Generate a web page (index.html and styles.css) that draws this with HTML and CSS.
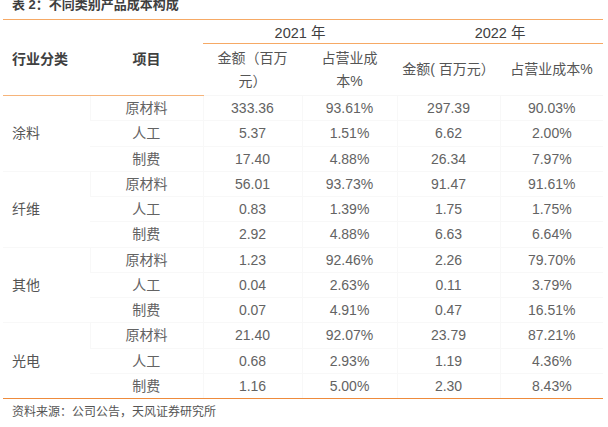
FILE: index.html
```html
<!DOCTYPE html>
<html lang="zh">
<head>
<meta charset="utf-8">
<link rel="stylesheet" href="styles.css">
</head>
<body>
<div class="title">表 2：不同类别产品成本构成</div>
<table class="cost">
  <colgroup>
    <col class="c1"><col class="c2"><col class="c3"><col class="c4"><col class="c5"><col class="c6">
  </colgroup>
  <thead>
    <tr class="year-row">
      <th class="blank" colspan="2" rowspan="2"><div class="head-left"><span class="h1">行业分类</span><span class="h2">项目</span></div></th>
      <th class="year" colspan="2">2021 年</th>
      <th class="year" colspan="2">2022 年</th>
    </tr>
    <tr class="sub-row">
      <th class="sub">金额（百万<br>元）</th>
      <th class="sub">占营业成<br>本%</th>
      <th class="sub">金额( 百万元）</th>
      <th class="sub">占营业成本%</th>
    </tr>
  </thead>
  <tbody>
    <tr><td class="cat" rowspan="3">涂料</td><td>原材料</td><td>333.36</td><td>93.61%</td><td>297.39</td><td>90.03%</td></tr>
    <tr><td>人工</td><td>5.37</td><td>1.51%</td><td>6.62</td><td>2.00%</td></tr>
    <tr><td>制费</td><td>17.40</td><td>4.88%</td><td>26.34</td><td>7.97%</td></tr>
    <tr><td class="cat" rowspan="3">纤维</td><td>原材料</td><td>56.01</td><td>93.73%</td><td>91.47</td><td>91.61%</td></tr>
    <tr><td>人工</td><td>0.83</td><td>1.39%</td><td>1.75</td><td>1.75%</td></tr>
    <tr><td>制费</td><td>2.92</td><td>4.88%</td><td>6.63</td><td>6.64%</td></tr>
    <tr><td class="cat" rowspan="3">其他</td><td>原材料</td><td>1.23</td><td>92.46%</td><td>2.26</td><td>79.70%</td></tr>
    <tr><td>人工</td><td>0.04</td><td>2.63%</td><td>0.11</td><td>3.79%</td></tr>
    <tr><td>制费</td><td>0.07</td><td>4.91%</td><td>0.47</td><td>16.51%</td></tr>
    <tr><td class="cat cat-last" rowspan="3">光电</td><td>原材料</td><td>21.40</td><td>92.07%</td><td>23.79</td><td>87.21%</td></tr>
    <tr><td>人工</td><td>0.68</td><td>2.93%</td><td>1.19</td><td>4.36%</td></tr>
    <tr class="last"><td>制费</td><td>1.16</td><td>5.00%</td><td>2.30</td><td>8.43%</td></tr>
  </tbody>
</table>
<div class="source">资料来源：公司公告，天风证券研究所</div>
</body>
</html>
```

FILE: styles.css
```css
html, body {
  margin: 0;
  padding: 0;
  background: #ffffff;
}
body {
  font-family: "Liberation Sans", "Noto Sans CJK SC", sans-serif;
  color: #5a5a5a;
  width: 608px;
  height: 427px;
  overflow: hidden;
}
.title {
  margin-top: -4px;
  padding-left: 12px;
  font-size: 13px;
  line-height: 18px;
  height: 18px;
  font-weight: bold;
  color: #3f3f3f;
}
.cost {
  margin-top: 5px;
  margin-left: 3px;
  width: 600px;
  table-layout: fixed;
  border-collapse: collapse;
  border-spacing: 0;
  font-size: 14px;
}
.c1 { width: 87px; }
.c2 { width: 113px; }
.c3 { width: 99px; }
.c4 { width: 95px; }
.c5 { width: 103px; }
.c6 { width: 103px; }
th, td {
  padding: 0;
  text-align: center;
  vertical-align: middle;
}
.year-row th {
  border-top: 1px solid #f6a965;
  height: 23px;
}
.year {
  border-bottom: 1px solid #f6a965;
  font-weight: normal;
  color: #404040;
  font-size: 14.5px;
}
.blank {
  border-bottom: 1px solid #f6b47a;
  text-align: left;
}
.head-left {
  display: flex;
  align-items: center;
  font-weight: bold;
  color: #404040;
}
.h1 {
  width: 87px;
  padding-left: 9px;
  box-sizing: border-box;
}
.h2 {
  width: 113px;
  text-align: center;
}
.sub-row th {
  height: 51px;
  font-weight: normal;
  color: #555555;
  line-height: 23px;
  border-bottom: 1px solid #f7f7f7;
}
tbody td {
  height: 24.25px;
  line-height: 18px;
  color: #636363;
  border-bottom: 1px solid #f8f8f8;
  border-left: 1px solid #f8f8f8;
}
tbody td:first-child { border-left: none; }
tbody td.cat {
  text-align: left;
  padding-left: 9px;
  color: #555555;
  border-left: none;
}
tbody tr.last td,
tbody td.cat-last {
  border-bottom: 1px solid #ee8b3c;
}
.source {
  margin-top: 5px;
  padding-left: 12px;
  font-size: 12px;
  line-height: 16px;
  color: #555555;
}
```
